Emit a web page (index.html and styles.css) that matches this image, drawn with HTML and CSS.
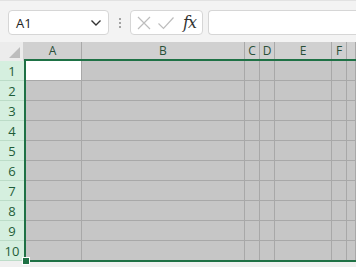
FILE: index.html
```html
<html>
<head>
	<title>sheet</title>
	<link rel="stylesheet" href="styles.css">
</head>
<body>

<div class="bar">
	<div class="namebox">
		<span class="ref">A1</span>
		<svg class="chev" width="12" height="8" viewBox="0 0 12 8"><path d="M1.5 1.5 L6 6 L10.5 1.5" fill="none" stroke="#333" stroke-width="1.4"/></svg>
	</div>
	<div class="dots"><i></i><i></i><i></i></div>
	<div class="fxbox">
		<svg width="16" height="16" viewBox="0 0 16 16"><path d="M2 2 L14 14 M14 2 L2 14" stroke="#bdbdbd" stroke-width="1.2"/></svg>
		<svg width="18" height="16" viewBox="0 0 18 16"><path d="M1.5 8.5 L6.5 13.5 L16.5 2.5" fill="none" stroke="#bdbdbd" stroke-width="1.2"/></svg>
		<span class="fx">fx</span>
	</div>
	<div class="formula"></div>
</div>

<div class="sheet">
	<div class="grid" id="grid">
		<div class="corner"></div>
		<div class="ch">A</div>
		<div class="ch">B</div>
		<div class="ch">C</div>
		<div class="ch">D</div>
		<div class="ch">E</div>
		<div class="ch">F</div>
		<div class="ch"></div>
	</div>
	<div class="sel"><span class="handle"></span></div>
</div>

<script type="text/javascript">
	var g = document.getElementById("grid");
	for(var r=1;r<=10;r++){
		var h = document.createElement("div");
		h.className = "rh";
		h.innerHTML = r;
		g.appendChild(h);
		for(var c=0;c<7;c++){
			var d = document.createElement("div");
			d.className = (r==1 && c==0) ? "cell active" : "cell";
			g.appendChild(d);
		}
	}
</script>

</body>
</html>
```

FILE: styles.css
```css
body{
	margin:0;
	width:356px;
	height:267px;
	overflow:hidden;
	background:#f0f0f0;
	font-family:"Open Sans","Noto Sans",sans-serif;
}
.bar{
	height:42px;
	display:flex;
	align-items:flex-start;
	padding:9px 0 0 8px;
	box-sizing:border-box;
	background:#f3f3f3;
	border-top:1px solid #e2e2e2;
}
.namebox{
	width:101px;
	height:25px;
	box-sizing:border-box;
	background:#fff;
	border:1px solid #d6d6d6;
	border-radius:4px;
	display:flex;
	align-items:center;
	justify-content:space-between;
	padding:0 6px 0 7px;
}
.ref{
	font-size:13px;
	color:#222;
}
.dots{
	width:21px;
	height:25px;
	display:flex;
	flex-direction:column;
	align-items:center;
	justify-content:center;
	gap:2px;
}
.dots i{
	width:2px;
	height:2px;
	background:#888;
	border-radius:1px;
}
.fxbox{
	width:73px;
	height:25px;
	box-sizing:border-box;
	background:#fff;
	border:1px solid #d6d6d6;
	border-radius:4px;
	display:flex;
	align-items:center;
	gap:5px;
	padding:0 4px 0 5px;
}
.fx{
	font-family:"DejaVu Serif","Liberation Serif",serif;
	font-style:italic;
	font-size:16px;
	color:#333;
	margin-left:3px;
	letter-spacing:-1px;
}
.formula{
	flex:1;
	margin-left:5px;
	height:25px;
	box-sizing:border-box;
	background:#fff;
	border:1px solid #d6d6d6;
	border-right:0;
	border-radius:4px 0 0 4px;
}
.sheet{
	position:relative;
}
.grid{
	display:grid;
	grid-template-columns:24px 58px 163px 15px 15px 57px 15px 9px;
	grid-template-rows:19px repeat(10,20px);
	background:#f0f0f0;
}
.corner{
	background:#ececec;
	border-right:1px solid #d0d0d0;
	position:relative;
}
.corner:after{
	content:"";
	position:absolute;
	right:3px;
	bottom:3px;
	border-left:11px solid transparent;
	border-bottom:11px solid #bdbdbd;
}
.ch{
	background:#d0d0d0;
	border-right:1px solid #a9a9a9;
	font-size:12px;
	color:#284f38;
	text-align:center;
	line-height:17px;
}
.rh{
	background:#d5efdf;
	border-bottom:1px solid #bcdcc8;
	font-size:13px;
	color:#1e5d38;
	text-align:center;
	line-height:20px;
}
.cell{
	background:#c6c6c6;
	border-right:1px solid #a8a8a8;
	border-bottom:1px solid #a8a8a8;
}
.cell.active{
	background:#fff;
}
.sel{
	position:absolute;
	left:24px;
	top:17px;
	right:-4px;
	height:203px;
	border:2px solid #1e7145;
	box-sizing:border-box;
}
.handle{
	position:absolute;
	left:-4px;
	bottom:-5px;
	width:6px;
	height:6px;
	background:#1e7145;
	border:1px solid #fff;
}
```
